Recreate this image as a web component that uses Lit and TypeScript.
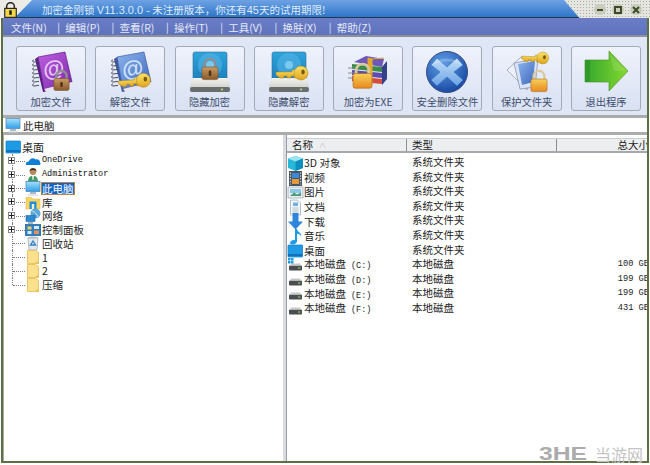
import { LitElement, html, css, svg } from 'lit';
import { customElement } from 'lit/decorators.js';

const padlock = (x: number, y: number, w: number) => svg`
  <g transform="translate(${x} ${y}) scale(${w / 20})">
    <path d="M4 11V7a6 6 0 0 1 12 0v4" fill="none" stroke="#8d8f90" stroke-width="2.6"/>
    <rect x="1" y="10" width="18" height="14" rx="2" fill="url(#gLock)" stroke="#6b4a26" stroke-width=".6"/>
    <rect x="8.6" y="14" width="2.8" height="6" rx="1.2" fill="#4c3018"/>
  </g>`;

const goldLock = (x: number, y: number, w: number) => svg`
  <g transform="translate(${x} ${y}) scale(${w / 20})">
    <path d="M4 11V7a6 6 0 0 1 12 0v4" fill="none" stroke="#d8c9a0" stroke-width="2.6"/>
    <rect x="1" y="10" width="18" height="14" rx="2" fill="url(#gGoldLock)" stroke="#a8661a" stroke-width=".6"/>
  </g>`;

const key = (x: number, y: number, w: number, angle = 0) => svg`
  <g transform="translate(${x} ${y}) rotate(${angle}) scale(${w / 32})">
    <path d="M0 6h16v-2h6v8h-4v-2h-3v2h-4v-2h-3v2h-4l-4-3z" fill="url(#gKey)" stroke="#a87f12" stroke-width=".5"/>
    <circle cx="25" cy="7" r="7" fill="url(#gKey)" stroke="#a87f12" stroke-width=".5"/>
    <ellipse cx="27" cy="6" rx="1.8" ry="2.4" fill="#7c5c0c"/>
  </g>`;

const book = (fill: string, edge: string, at: string) => svg`
  <path d="M9 7 36 2l7 30-28 7z" fill="${fill}" stroke="${edge}" stroke-width=".7"/>
  <path d="M15 39l28-7 .8 2.5L17 41.5z" fill="#e6e2ee"/>
  <path d="M9 7l6 32 2 2.5-3 .5L6 9z" fill="${edge}"/>
  ${[10, 14, 18, 22, 26, 30, 34].map(
    (y) => svg`<path d="M5 ${y}c-2 0-2 2 0 2l5-.6" fill="none" stroke="#4d4d5c" stroke-width="1"/>`
  )}
  <text x="25" y="26" font-family="Liberation Sans" font-size="22" font-weight="700" text-anchor="middle" fill="${at}" transform="rotate(-11 25 20)">@</text>`;

const hardDisk = svg`
  <rect x="5" y="2" width="34" height="28" rx="2" fill="url(#gDisk)" stroke="#356f96" stroke-width=".6"/>
  <circle cx="22" cy="15" r="12" fill="#4fb0e4" opacity=".65"/>
  <circle cx="22" cy="15" r="4" fill="#8ad2f2" opacity=".8"/>
  <path d="M5 28h34l3 7v5a2 2 0 0 1-2 2H4a2 2 0 0 1-2-2v-5z" fill="url(#gBase)"/>
  <rect x="2" y="37" width="40" height="5" rx="2" fill="#6a6d6e"/>
  <circle cx="34" cy="39.5" r="1" fill="#c9e36a"/>`;

const toolIcons = [
  svg`${book('url(#gPurple)', '#5b1d86', '#e6c9f4')}${padlock(24, 20, 17)}`,
  svg`${book('url(#gBlueBook)', '#3c5aa8', '#cfe2fa')}${key(10, 25, 32, -4)}`,
  svg`${hardDisk}${padlock(13, 8, 18)}`,
  svg`${hardDisk}${key(9, 16, 32)}`,
  svg`
    <path d="M8 12 20 6l18 3-2 8z" fill="#6d57b8"/>
    <path d="M6 14l30 3v5l-30-3z" fill="#3c8a4a"/>
    <path d="M6 20l30 3v5l-30-3z" fill="#5c4cb0"/>
    <path d="M6 26l30 3v5l-30-3z" fill="#d74b3c"/>
    <path d="M36 17l5-6v18l-5 6z" fill="#34408a"/>
    <path d="M22 8l4 1v26l-4-.6zM26 9l12-1" fill="#e6a92c" stroke="#e6a92c"/>
    <path d="M2 18h8M2 23h8M2 28h8" stroke="#8a8a8a" stroke-width="1"/>
    ${goldLock(6, 13, 21)}`,
  svg`
    <circle cx="22" cy="22" r="20.5" fill="url(#gGlobe)" stroke="#3b4e7a" stroke-width="1"/>
    <path d="M12 8l10 9 10-9 6 7-9 7 9 8-6 6-10-9-10 9-6-6 9-8-9-7z" fill="url(#gCross)" stroke="#2f6dba" stroke-width=".6"/>
    <path d="M6 16a18 14 0 0 1 32 0c-8-6-24-6-32 0z" fill="#fff" opacity=".22"/>`,
  svg`
    <path d="M2 20 16 7l16 5-10 28z" fill="#eef1f8" stroke="#8b94ab" stroke-width=".7"/>
    <path d="M9 13l24-4-3 28-15 2z" fill="#dbe4f6" stroke="#7888ae" stroke-width=".7"/>
    <path d="M13 14l17-3-2 21-11 3z" fill="url(#gBlueBook)"/>
    ${key(17, 1, 27, 3)}
    ${goldLock(25, 20, 18)}`,
  svg`
    <path d="M1 10h24V1l19 20-19 20v-9H1z" fill="url(#gArrow)" stroke="#4b8c1f" stroke-width=".6"/>
    <path d="M1 10h5v22H1z" fill="#2f9a2a"/>
    <path d="M25 3l17 18H30z" fill="#fff" opacity=".12"/>`,
];

const monitor = svg`
  <rect x="1" y="1.5" width="14" height="10" fill="url(#gScreen)" stroke="#4b84b8" stroke-width=".7"/>
  <path d="M5 13h6" stroke="#9aa9b8" stroke-width="1.6"/><path d="M3 15h10" stroke="#c3cfd9" stroke-width="1"/>`;

const desktop = svg`
  <rect x="1" y="2" width="14.5" height="12" rx=".6" fill="#1f9be6" stroke="#1178c8" stroke-width=".7"/>
  <path d="M1 12h14.5" stroke="#0b5fae" stroke-width="1.4"/>`;

const diskDrive = svg`
  <rect x="2" y="8.5" width="13" height="5" rx="1" fill="#4a4e50"/>
  <path d="M3 8.5l1-2h9l1 2z" fill="#c3c8c9"/>
  <path d="M11 11h2.4" stroke="#9fe05e" stroke-width="1"/>`;

const folder = svg`
  <path d="M2.500 1.500h8l3 2v11h-11z" fill="#fbe08e" stroke="#e4bb4e" stroke-width=".8"/>
  <path d="M10 14l3.500-2v2.500z" fill="#e8bd50"/>`;

const treeIcons: Record<string, unknown> = {
  cloud: svg`<path d="M1 12c-.6-2.200 1-3.800 2.800-3.400C4.600 5.400 8.200 4 10.600 6.400c2.400-.8 4.600 1 4.400 3.200 1 .8.600 2.400-.6 2.400z" fill="#0f7fd6"/>`,
  person: svg`<circle cx="8" cy="4.500" r="3.400" fill="#b98a5e"/><path d="M4.600 4c.4-3.600 6.400-3.600 6.800 0-2-1.200-4.800-1.200-6.800 0z" fill="#2f2b22"/><path d="M3 15.500c0-5 1.500-6.500 5-6.500s5 1.500 5 6.500z" fill="#3f9a66"/><path d="M7 9h2l-.500 4h-1z" fill="#e8eee0"/>`,
  monitor,
  library: svg`<path d="M1 3.500h5.500l1.500 1.500h7v10H1z" fill="#fbd55e" stroke="#e0ad36" stroke-width=".5"/><rect x="4.500" y="7.500" width="7" height="7.500" fill="#1f8fdc"/><rect x="6.800" y="10" width="2.400" height="5" fill="#fdf0c0"/>`,
  network: svg`<circle cx="10.500" cy="5.500" r="5" fill="#5aa7d8"/><path d="M7 3c3 1 5 3 6 6" stroke="#c9e7f7" stroke-width="1" fill="none"/><rect x="1" y="7.500" width="9" height="6" fill="#2d8ad0" stroke="#1f6aa8" stroke-width=".6"/><path d="M3 15h5" stroke="#7f97a8" stroke-width="1.400"/>`,
  panel: svg`<rect x=".5" y="2.500" width="15.500" height="11" fill="#2f7fc0" stroke="#1f5f98" stroke-width=".7"/><rect x="2.500" y="4.500" width="4" height="3" fill="#f1d35a"/><rect x="9" y="4" width="5" height="3" fill="#d6ecf8"/><rect x="2.500" y="9" width="4" height="3" fill="#d6ecf8"/><rect x="9" y="8.500" width="5" height="3.500" fill="#e88f5a"/>`,
  bin: svg`<path d="M3 3h10l-1 12H4z" fill="#e3e8ec" stroke="#9aa5ad" stroke-width=".7"/><path d="M3 3c2-1.600 8-1.600 10 0" fill="#bcc6cd" stroke="#9aa5ad" stroke-width=".5"/><path d="M8 6l2.500 4h-5z" fill="none" stroke="#2d83c8" stroke-width="1.400"/>`,
  folder,
};

const listIcons: Record<string, unknown> = {
  cube: svg`<path d="M8.500 1 16 3.500v9.500L8.500 16 1 13V3.500z" fill="#27b7d8"/><path d="M1 3.500 8.500 1 16 3.500 8.500 6.500z" fill="#9ce6f2"/><path d="M8.500 6.500V16L16 13V3.500z" fill="#0f8fc0"/>`,
  video: svg`<rect x="2" y="1" width="13" height="15" fill="#4b5560"/><rect x="5" y="3" width="7" height="5" fill="#3d88d8"/><rect x="5" y="9" width="7" height="5" fill="#e39a3c"/><path d="M3.500 2.500v12" stroke="#c8d0d6" stroke-dasharray="1.400 1.400" stroke-width="1.200"/><path d="M13.500 2.500v12" stroke="#c8d0d6" stroke-dasharray="1.400 1.400" stroke-width="1.200"/>`,
  picture: svg`<rect x="1" y="3" width="15" height="11" fill="#e8eef2" stroke="#98a4ac" stroke-width=".7"/><rect x="3" y="5" width="11" height="4" fill="#8ec6e8"/><path d="M3 12l4-3.500 3 2 4-2v3.500z" fill="#4f9a7a"/>`,
  doc: svg`<path d="M3.500 1h7l3 3v12h-10z" fill="#f3f6f9" stroke="#9fb0bf" stroke-width=".8"/><rect x="6" y="3.500" width="5" height="3.500" fill="#6fb2e0"/><path d="M5.500 9h6M5.500 11h6M5.500 13h6" stroke="#9fb0bf" stroke-width=".8"/>`,
  download: svg`<path d="M5.500 0h6v8.500H16L8.500 16.500 1 8.500h4.500z" fill="#2e86dc"/>`,
  music: svg`<path d="M8 1h2c.4 3 4.500 3.500 4.500 7.500-1-1.800-2.600-2.600-4.500-2.800v7.300c0 2-2.200 3.500-4.500 3.500-3 0-3.400-3 0-4.200 1-.3 1.800-.4 2.500-.1z" fill="#1e9be8"/>`,
  desktop,
  sysdisk: svg`${diskDrive}<rect x="1" y="1" width="2.500" height="2.500" fill="#1f9be6"/><rect x="4" y="1" width="2.500" height="2.500" fill="#1f9be6"/><rect x="1" y="4" width="2.500" height="2.500" fill="#1f9be6"/><rect x="4" y="4" width="2.500" height="2.500" fill="#1f9be6"/>`,
  disk: diskDrive,
};

const tools = ['加密文件', '解密文件', '隐藏加密', '隐藏解密', '加密为EXE', '安全删除文件', '保护文件夹', '退出程序'];
const menus = ['文件(N)', '编辑(P)', '查看(R)', '操作(T)', '工具(V)', '换肤(X)', '帮助(Z)'];

const tree = [
  { icon: 'cloud', label: 'OneDrive', latin: true, plus: true },
  { icon: 'person', label: 'Administrator', latin: true, plus: true },
  { icon: 'monitor', label: '此电脑', plus: true, selected: true },
  { icon: 'library', label: '库', plus: true },
  { icon: 'network', label: '网络', plus: true },
  { icon: 'panel', label: '控制面板', plus: true },
  { icon: 'bin', label: '回收站' },
  { icon: 'folder', label: '1' },
  { icon: 'folder', label: '2' },
  { icon: 'folder', label: '压缩', last: true },
];

const files = [
  { icon: 'cube', name: '3D 对象', type: '系统文件夹', size: '' },
  { icon: 'video', name: '视频', type: '系统文件夹', size: '' },
  { icon: 'picture', name: '图片', type: '系统文件夹', size: '' },
  { icon: 'doc', name: '文档', type: '系统文件夹', size: '' },
  { icon: 'download', name: '下载', type: '系统文件夹', size: '' },
  { icon: 'music', name: '音乐', type: '系统文件夹', size: '' },
  { icon: 'desktop', name: '桌面', type: '系统文件夹', size: '' },
  { icon: 'sysdisk', name: '本地磁盘 (C:)', type: '本地磁盘', size: '100 GB' },
  { icon: 'disk', name: '本地磁盘 (D:)', type: '本地磁盘', size: '199 GB' },
  { icon: 'disk', name: '本地磁盘 (E:)', type: '本地磁盘', size: '199 GB' },
  { icon: 'disk', name: '本地磁盘 (F:)', type: '本地磁盘', size: '431 GB' },
];

@customElement('app-root')
export class AppRoot extends LitElement {
  static styles = css`
    :host {
      display: block;
      position: relative;
      width: 650px;
      height: 465px;
      overflow: hidden;
      background: #fff;
      color: #1c1c1c;
      font-family: 'Noto Sans CJK SC', 'Liberation Sans', sans-serif;
      font-size: 10.5px;
    }
    .defs {
      position: absolute;
      width: 0;
      height: 0;
    }
    .title {
      height: 18px;
      box-sizing: border-box;
      padding-left: 42px;
      padding-top: 1px;
      line-height: 17px;
      font-size: 10.5px;
      color: #dfeafa;
      background: linear-gradient(#6ea2e4, #2e76c8);
      border-bottom: 1px solid #25364c;
      white-space: nowrap;
    }
    .title b {
      font-family: 'Liberation Sans', sans-serif;
      font-weight: 400;
      font-size: 11px;
    }
    .corner-left {
      position: absolute;
      left: 0;
      top: 0;
      width: 32px;
      height: 18px;
      background: #ecebe6;
      clip-path: polygon(0 0, 100% 0, 45% 100%, 0 100%);
    }
    .app-lock {
      position: absolute;
      left: 4px;
      top: 2px;
    }
    .corner-right {
      position: absolute;
      right: 0;
      top: 0;
      width: 86px;
      height: 18px;
      background: radial-gradient(#a9aca4 0.7px, transparent 0.9px) 0 0 / 3px 3px, #e6e6e0;
      clip-path: polygon(0 0, 100% 0, 100% 100%, 18% 100%);
    }
    .win-btns {
      position: absolute;
      right: 8px;
      top: 4px;
      display: flex;
      gap: 6px;
    }
    .win-btn {
      width: 12px;
      height: 11px;
      border-radius: 5px;
      background: #c9cdbc;
      display: grid;
      place-items: center;
    }
    .body {
      margin: 0 1px 2px 1px;
      height: 445px;
      display: flex;
      flex-direction: column;
      box-sizing: border-box;
      border: solid #5c7044;
      border-width: 0 2px 2px 2px;
    }
    .menu {
      height: 19px;
      flex: none;
      display: flex;
      align-items: center;
      padding-left: 8px;
      padding-top: 1px;
      background: linear-gradient(#6a7dc6, #5f73bd);
      color: #e4e9f7;
      border-bottom: 2px solid #8e919a;
      box-sizing: border-box;
      font-size: 10.5px;
    }
    .menu-item {
      width: 46.3px;
      white-space: nowrap;
    }
    .menu-sep {
      width: 8px;
      line-height: 12px;
      font-size: 10px;
    }
    .toolbar {
      height: 78px;
      flex: none;
      box-sizing: border-box;
      padding: 9px 6px 4px 13px;
      display: flex;
      justify-content: space-between;
      background: #dfe6f5;
    }
    .tool {
      width: 70px;
      height: 65px;
      box-sizing: border-box;
      border: 1px solid #a3a9b5;
      border-radius: 3px;
      background: linear-gradient(#eef2fb, #d9e1f3);
      display: flex;
      flex-direction: column;
      align-items: center;
      padding-top: 3px;
      color: #3d4c6b;
      font-size: 10.3px;
      line-height: 14px;
      white-space: nowrap;
    }
    .tool svg {
      flex: none;
      margin-bottom: 1px;
    }
    .address {
      flex: none;
      height: 20px;
      box-sizing: border-box;
      border-top: 3px solid #a9acab;
      border-bottom: 3px solid #a9acab;
      background: #fff;
      display: flex;
      align-items: center;
      gap: 2px;
      padding-left: 2px;
      font-size: 10.5px;
    }
    .panes {
      flex: 1;
      display: flex;
      min-height: 0;
    }
    .tree {
      width: 280px;
      flex: none;
      box-sizing: border-box;
      border-left: 1px solid #a9acab;
      padding: 4px 0 0 1px;
    }
    .splitter {
      width: 3px;
      flex: none;
      background: #d8dbe0;
      border-right: 1px solid #9a9da3;
    }
    .row-root {
      height: 15px;
      display: flex;
      align-items: center;
      gap: 1px;
      font-size: 11px;
    }
    .node {
      height: 13.75px;
      display: flex;
      align-items: center;
      white-space: nowrap;
    }
    .guide {
      position: relative;
      width: 20px;
      height: 100%;
      flex: none;
    }
    .guide::before {
      content: '';
      position: absolute;
      left: 7px;
      top: 0;
      bottom: 0;
      border-left: 1px dotted #7f7f7f;
    }
    .guide.last::before {
      bottom: 50%;
    }
    .guide::after {
      content: '';
      position: absolute;
      left: 8px;
      right: 0;
      top: 50%;
      border-top: 1px dotted #7f7f7f;
    }
    .plus {
      position: absolute;
      left: 3px;
      top: 3px;
      width: 7px;
      height: 7px;
      box-sizing: border-box;
      border: 1px solid #8a8a8a;
      background: linear-gradient(90deg, transparent 2px, #222 2px, #222 3px, transparent 3px) center / 100% 5px no-repeat,
        linear-gradient(#222, #222) center / 5px 1px no-repeat, #fff;
      z-index: 1;
    }
    .node-label {
      padding: 0 1px;
      line-height: 13px;
      height: 13px;
    }
    .node-label.selected {
      background: #1463c0;
      color: #fff;
      outline: 1px solid #b9824a;
      outline-offset: -1px;
    }
    .mono {
      font-family: 'Liberation Mono', monospace;
      font-size: 8.5px;
      color: #111;
    }
    .list {
      flex: 1;
      min-width: 0;
      overflow: hidden;
      display: flex;
      flex-direction: column;
      padding-top: 3px;
    }
    .list-head,
    .file {
      display: grid;
      grid-template-columns: 120px 150px 92px;
      white-space: nowrap;
    }
    .list-head {
      height: 15px;
      flex: none;
      background: #eceef0;
      border-top: 1px solid #c9ccd2;
      border-bottom: 2px solid #a5a8ad;
      box-sizing: border-box;
      line-height: 12px;
    }
    .head-cell {
      padding-left: 5px;
      border-right: 1px solid #8c8f92;
      box-sizing: border-box;
      display: flex;
      gap: 6px;
      align-items: center;
    }
    .head-cell.end {
      justify-content: flex-end;
      border-right: 0;
    }
    .sort {
      color: #bbb;
      font-size: 7px;
    }
    .file {
      height: 14.6px;
      line-height: 14.6px;
    }
    .list-head + .file {
      margin-top: 2px;
    }
    .file-name {
      display: flex;
      align-items: center;
      gap: 0;
    }
    .file-name svg {
      flex: none;
    }
    .file-type {
      padding-left: 5px;
    }
    .file-size {
      text-align: right;
      font-family: 'Liberation Mono', monospace;
      font-size: 8.7px;
    }
    .drive {
      font-family: 'Liberation Mono', monospace;
      font-size: 8.5px;
      margin-left: 5px;
    }
    .mark {
      position: absolute;
      right: 7px;
      bottom: 2px;
      display: flex;
      align-items: center;
      gap: 8px;
      color: #c4c4c4;
      font-size: 16px;
      line-height: 18px;
    }
    .mark-logo {
      font-family: 'Liberation Sans', sans-serif;
      font-weight: 700;
      font-size: 19px;
      color: #ababab;
      transform: scaleX(1.3);
      transform-origin: right center;
    }
  `;

  private nameCell(name: string) {
    const m = name.match(/^(.*) (\(.*\))$/);
    if (!m) return name;
    return html`${m[1]}<span class="drive">${m[2]}</span>`;
  }

  render() {
    return html`
      <svg class="defs" aria-hidden="true">
        <defs>
          <linearGradient id="gPurple" x1="0" y1="0" x2="1" y2="1"><stop offset="0" stop-color="#c05fe4"/><stop offset="1" stop-color="#7a2aa6"/></linearGradient>
          <linearGradient id="gBlueBook" x1="0" y1="0" x2="1" y2="1"><stop offset="0" stop-color="#8db4ec"/><stop offset="1" stop-color="#3c66bd"/></linearGradient>
          <linearGradient id="gLock" x1="0" y1="0" x2="0" y2="1"><stop offset="0" stop-color="#c89a62"/><stop offset="1" stop-color="#8a5a2c"/></linearGradient>
          <linearGradient id="gGoldLock" x1="0" y1="0" x2="0" y2="1"><stop offset="0" stop-color="#f8cf58"/><stop offset="1" stop-color="#e88a20"/></linearGradient>
          <linearGradient id="gKey" x1="0" y1="0" x2="0" y2="1"><stop offset="0" stop-color="#fbe36a"/><stop offset="1" stop-color="#e0a51e"/></linearGradient>
          <linearGradient id="gDisk" x1="0" y1="0" x2="0" y2="1"><stop offset="0" stop-color="#2ea4dc"/><stop offset="1" stop-color="#1c7fbe"/></linearGradient>
          <linearGradient id="gBase" x1="0" y1="0" x2="0" y2="1"><stop offset="0" stop-color="#f2f2ee"/><stop offset="1" stop-color="#c4c6c2"/></linearGradient>
          <radialGradient id="gGlobe" cx=".4" cy=".3" r=".8"><stop offset="0" stop-color="#5f9fe8"/><stop offset="1" stop-color="#123f9c"/></radialGradient>
          <linearGradient id="gCross" x1="0" y1="0" x2="0" y2="1"><stop offset="0" stop-color="#c2def8"/><stop offset="1" stop-color="#6aa4e4"/></linearGradient>
          <linearGradient id="gArrow" x1="0" y1="0" x2="1" y2="0"><stop offset="0" stop-color="#34a82e"/><stop offset="1" stop-color="#84d82e"/></linearGradient>
          <linearGradient id="gScreen" x1="0" y1="0" x2="0" y2="1"><stop offset="0" stop-color="#a8e0fa"/><stop offset="1" stop-color="#2f9fe8"/></linearGradient>
        </defs>
      </svg>

      <div class="title">加密金刚锁 <b>V11.3.0.0 -</b> 未注册版本，你还有<b>45</b>天的试用期限!</div>
      <div class="corner-left"></div>
      <svg class="app-lock" width="13" height="16" viewBox="0 0 20 25">${svg`
        <path d="M4 11V7a6 6 0 0 1 12 0v4" fill="none" stroke="#2a2a2a" stroke-width="2.400"/>
        <rect x="1" y="10" width="18" height="14" fill="#f4d84a" stroke="#222" stroke-width="1.800"/>
        <rect x="8" y="13" width="4" height="7" fill="#222"/>`}</svg>
      <div class="corner-right"></div>
      <div class="win-btns">
        <div class="win-btn"><svg width="8" height="8" viewBox="0 0 8 8"><path d="M1 4h6" stroke="#3e4a28" stroke-width="2"/></svg></div>
        <div class="win-btn"><svg width="8" height="8" viewBox="0 0 8 8"><rect x="1" y="1" width="6" height="6" fill="none" stroke="#3e4a28" stroke-width="2"/></svg></div>
        <div class="win-btn"><svg width="8" height="8" viewBox="0 0 8 8"><path d="M1 1l6 6M7 1l-6 6" stroke="#3e4a28" stroke-width="2"/></svg></div>
      </div>

      <div class="body">
        <div class="menu">
          ${menus.map(
            (m, i) => html`<span class="menu-item">${m}</span>${i < menus.length - 1 ? html`<span class="menu-sep">|</span>` : ''}`
          )}
        </div>

        <div class="toolbar">
          ${tools.map(
            (t, i) => html`
              <div class="tool">
                <svg width="44" height="44" viewBox="0 0 44 44">${toolIcons[i]}</svg>
                <span>${t}</span>
              </div>
            `
          )}
        </div>

        <div class="address">
          <svg width="16" height="16" viewBox="0 0 16 16">${monitor}</svg>
          <span>此电脑</span>
        </div>

        <div class="panes">
          <div class="tree">
            <div class="row-root">
              <svg width="16" height="16" viewBox="0 0 16 16">${desktop}</svg>
              <span>桌面</span>
            </div>
            ${tree.map(
              (n) => html`
                <div class="node">
                  <div class="guide ${n.last ? 'last' : ''}">${n.plus ? html`<div class="plus"></div>` : ''}</div>
                  <svg width="16" height="16" viewBox="0 0 16 16">${treeIcons[n.icon]}</svg>
                  <span class="node-label ${n.selected ? 'selected' : ''} ${n.latin ? 'mono' : ''}">${n.label}</span>
                </div>
              `
            )}
          </div>
          <div class="splitter"></div>
          <div class="list">
            <div class="list-head">
              <div class="head-cell">名称 <span class="sort">∧</span></div>
              <div class="head-cell">类型</div>
              <div class="head-cell end">总大小</div>
            </div>
            ${files.map(
              (f) => html`
                <div class="file">
                  <div class="file-name">
                    <svg width="17" height="17" viewBox="0 0 17 17">${listIcons[f.icon]}</svg>
                    <span>${this.nameCell(f.name)}</span>
                  </div>
                  <div class="file-type">${f.type}</div>
                  <div class="file-size">${f.size}</div>
                </div>
              `
            )}
          </div>
        </div>
      </div>

      <div class="mark"><span class="mark-logo">3HE</span><span>当游网</span></div>
    `;
  }
}

declare global {
  interface HTMLElementTagNameMap {
    'app-root': AppRoot;
  }
}
